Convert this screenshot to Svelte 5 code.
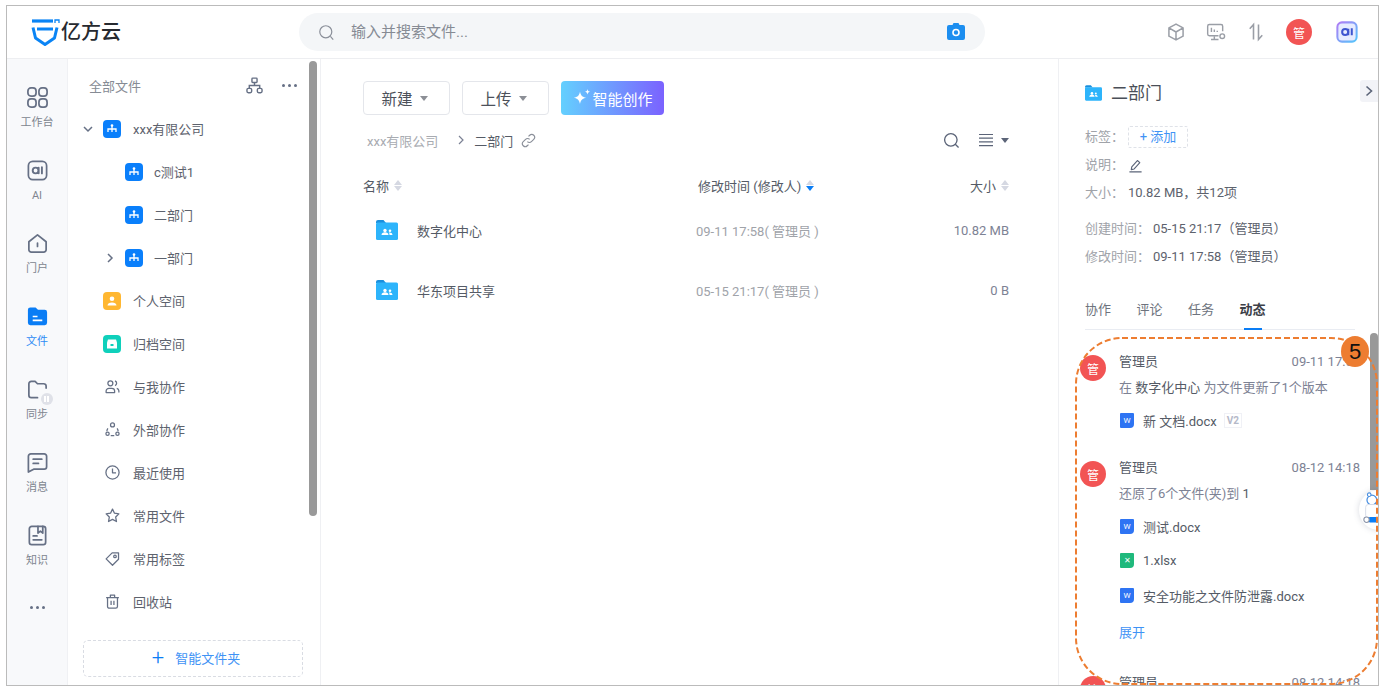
<script>
	const glyphs = {
		apps: '<rect x="2" y="2" width="8.500" height="8.500" rx="3.200"/><rect x="13.500" y="2" width="8.500" height="8.500" rx="3.200"/><rect x="2" y="13.500" width="8.500" height="8.500" rx="3.200"/><rect x="13.500" y="13.500" width="8.500" height="8.500" rx="3.200"/>',
		ai: '<rect x="2.500" y="2.500" width="19" height="19" rx="4.500"/><path d="M13.200 9.200v5.600M13 12a3 3 0 1 1-6 0 3 3 0 0 1 6 0zM16.600 8.600v6.400" stroke-width="2"/>',
		home: '<path d="M3 10.200 12 3l9 7.200v8.300a2.500 2.500 0 0 1-2.500 2.500h-13A2.500 2.500 0 0 1 3 18.500z"/><path d="M12 11.500v3.500"/>',
		sync: '<path d="M12 20.500H5.500A2.500 2.500 0 0 1 3 18V6a2.500 2.500 0 0 1 2.500-2.500h4L12 6h6.500A2.500 2.500 0 0 1 21 8.500v2"/>',
		message: '<path d="M5 3h14a2.500 2.500 0 0 1 2.500 2.500v11A2.500 2.500 0 0 1 19 19H8l-5.500 3V5.500A2.500 2.500 0 0 1 5 3z"/><path d="M7.500 8.500h9M7.500 13h5.500"/>',
		book: '<rect x="3.500" y="2.500" width="17" height="19" rx="2.500"/><path d="M12.500 2.500v7l2.500-2 2.500 2v-7M7.500 12.500h4M7.500 16.500h9"/>',
		people: '<circle cx="9" cy="7.500" r="3.500"/><path d="M3 20.500v-2a4 4 0 0 1 4-4h4a4 4 0 0 1 4 4v2zM15.500 4.200a3.500 3.500 0 0 1 0 6.600M18 14.500a4 4 0 0 1 3 3.500v2.500"/>',
		outer: '<circle cx="12" cy="5.500" r="2.800"/><circle cx="5" cy="18" r="2.300"/><circle cx="19" cy="18" r="2.300"/><path d="M5.500 10.500a8 8 0 0 0-1.500 4M18.500 10.500a8 8 0 0 1 1.500 4M9.500 20.800h5"/>',
		clock: '<circle cx="12" cy="12" r="9.300"/><path d="M12 6.500V12.500h5"/>',
		star: '<path d="m12 3 2.800 5.800 6.200.9-4.500 4.500 1.100 6.300L12 17.500l-5.600 3 1.100-6.300L3 9.700l6.200-.9z"/>',
		tag: '<path d="M3 12.500 11.500 4H20.500v9L12 21.500z"/><circle cx="15.500" cy="9" r="1.800"/>',
		trash: '<path d="M5 7v12a2.500 2.500 0 0 0 2.500 2.500h9A2.500 2.500 0 0 0 19 19V7M3 6.500h18M9 6V3h6v3M10 11v6M14 11v6"/>'
	};

	const railItems = [
		{ icon: 'apps', label: '工作台' },
		{ icon: 'ai', label: 'AI' },
		{ icon: 'home', label: '门户' },
		{ icon: 'file', label: '文件', active: true },
		{ icon: 'sync', label: '同步' },
		{ icon: 'message', label: '消息' },
		{ icon: 'book', label: '知识' }
	];

	const treeItems = [
		{ label: 'xxx有限公司', kind: 'org', arrow: 'down', depth: 0 },
		{ label: 'c测试1', kind: 'org', depth: 1 },
		{ label: '二部门', kind: 'org', depth: 1 },
		{ label: '一部门', kind: 'org', arrow: 'right', depth: 1 },
		{ label: '个人空间', kind: 'person', depth: 0 },
		{ label: '归档空间', kind: 'archive', depth: 0 },
		{ label: '与我协作', icon: 'people', depth: 0 },
		{ label: '外部协作', icon: 'outer', depth: 0 },
		{ label: '最近使用', icon: 'clock', depth: 0 },
		{ label: '常用文件', icon: 'star', depth: 0 },
		{ label: '常用标签', icon: 'tag', depth: 0 },
		{ label: '回收站', icon: 'trash', depth: 0 }
	];

	const files = [
		{ name: '数字化中心', time: '09-11 17:58', size: '10.82 MB' },
		{ name: '华东项目共享', time: '05-15 21:17', size: '0 B' }
	];

	const tabs = ['协作', '评论', '任务', '动态'];
</script>

{#snippet sharedFolder(cls)}
	<svg class={cls} viewBox="0 0 22 20">
		<path d="M0 2a2 2 0 0 1 2-2h5.500l2.500 3H0z" fill="#1b8fdc" />
		<rect y="2.500" width="22" height="17.500" rx="1.500" fill="#2db4fb" />
		<circle cx="9" cy="10.500" r="1.700" fill="#fff" />
		<circle cx="14" cy="10.800" r="1.300" fill="#fff" />
		<path d="M5.500 15c0-2 1.500-2.800 3.500-2.800s3.500.8 3.500 2.800zM13.500 15c0-1.200-.2-1.800-.8-2.500 2-.3 3.800.4 3.800 2.500z" fill="#fff" />
	</svg>
{/snippet}

{#snippet docIcon(kind)}
	<span class="doc {kind}">{kind === 'word' ? 'W' : '✕'}</span>
{/snippet}

<div class="frame">
	<header class="topbar">
		<div class="brand">
			<svg class="brand-mark" viewBox="0 0 30 28" fill="none" stroke="#0a84f5">
				<path d="M1 3h21" stroke-width="3.200" />
				<path d="M24 5V2h4v3" stroke-width="1.300" />
				<path d="M2 9.500 4.500 20 14 26.500 23.500 20 26 9.500" stroke-width="3" stroke-linejoin="round" />
				<path d="M6 11h16" stroke-width="3" />
			</svg>
			<span class="brand-name">亿方云</span>
		</div>
		<div class="search">
			<svg class="search-icon" viewBox="0 0 24 24" fill="none" stroke="#8a8f99" stroke-width="1.700">
				<circle cx="11" cy="11" r="8.500" /><path d="m17.500 17.500 4 4.500" />
			</svg>
			<span class="search-hint">输入并搜索文件...</span>
			<svg class="camera" viewBox="0 0 20 20">
				<path d="M6.500 3 7.500 1h5l1 2H17a2 2 0 0 1 2 2v11a2 2 0 0 1-2 2H3a2 2 0 0 1-2-2V5a2 2 0 0 1 2-2z" fill="#1c8ef0" />
				<circle cx="10" cy="10.500" r="3" fill="none" stroke="#fff" stroke-width="1.600" />
			</svg>
		</div>
		<div class="top-actions">
			<svg class="top-icon" viewBox="0 0 24 24" fill="none" stroke="#9a9ea6" stroke-width="1.800" stroke-linejoin="round">
				<path d="M12 2.500 20.500 7v10L12 21.500 3.500 17V7zM3.500 7l8.500 5 8.500-5M12 12v9.500" />
			</svg>
			<svg class="top-icon" viewBox="0 0 24 24" fill="none" stroke="#9a9ea6" stroke-width="1.700">
				<path d="M15 16.500H4a2 2 0 0 1-2-2V5a2 2 0 0 1 2-2h14a2 2 0 0 1 2 2v6" />
				<path d="M6.500 7v5M10 9v3M13.500 10.500v1.500M10 17v3.500M6 21h9" />
				<circle cx="19.500" cy="17" r="2.800" />
			</svg>
			<svg class="top-icon" viewBox="0 0 24 24" fill="none" stroke="#9a9ea6" stroke-width="1.900">
				<path d="M9 21V3L4.500 8M15 3v18l4.500-5" />
			</svg>
			<span class="avatar top-avatar">管</span>
			<svg class="top-icon ai-badge" viewBox="0 0 24 24" fill="none">
				<defs>
					<linearGradient id="aiStroke" x1="0" y1="0" x2="1" y2="1">
						<stop offset="0" stop-color="#b07cf5" /><stop offset="1" stop-color="#55c5fb" />
					</linearGradient>
				</defs>
				<rect x="1.500" y="1.500" width="21" height="21" rx="5" fill="#e6ebff" stroke="url(#aiStroke)" stroke-width="2.200" />
				<circle cx="10" cy="12" r="3.300" stroke="#3f55d0" stroke-width="2.200" />
				<path d="M13.400 8.500V15.500M17.200 8V15.500" stroke="#3f55d0" stroke-width="2.200" />
			</svg>
		</div>
	</header>

	<div class="body">
		<nav class="rail">
			{#each railItems as item}
				<div class="rail-item" class:active={item.active}>
					{#if item.icon === 'file'}
						<svg class="rail-icon" viewBox="0 0 24 24">
							<path d="M2 5a2.500 2.500 0 0 1 2.500-2.500H10L12.500 5h7A2.500 2.500 0 0 1 22 7.500v11a2.500 2.500 0 0 1-2.500 2.500h-15A2.500 2.500 0 0 1 2 18.500z" fill="#0a7df5" />
							<path d="M7 12h5M7 16h10" stroke="#fff" stroke-width="1.800" />
						</svg>
					{:else}
						<span class="rail-icon-wrap">
							<svg class="rail-icon" viewBox="0 0 24 24" fill="none" stroke="#667085" stroke-width="1.800" stroke-linejoin="round" stroke-linecap="round">
								{@html glyphs[item.icon]}
							</svg>
							{#if item.icon === 'sync'}
								<span class="sync-badge"><i></i><i></i></span>
							{/if}
						</span>
					{/if}
					<span class="rail-label">{item.label}</span>
				</div>
			{/each}
			<div class="rail-more"><i></i><i></i><i></i></div>
		</nav>

		<aside class="tree">
			<div class="tree-head">
				<span class="tree-title">全部文件</span>
				<svg class="org-chart" viewBox="0 0 18 18" fill="none" stroke="#667085" stroke-width="1.500">
					<rect x="6.300" y="1.200" width="5.400" height="4.600" rx=".8" />
					<rect x="1" y="12" width="5" height="4.600" rx="1.500" />
					<rect x="12" y="12" width="5" height="4.600" rx="1.500" />
					<path d="M9 6v3M3.500 12V9h11v3" />
				</svg>
				<div class="more-dots"><i></i><i></i><i></i></div>
			</div>
			<ul class="tree-list">
				{#each treeItems as row}
					<li class="tree-row" class:nested={row.depth === 1}>
						{#if row.arrow}
							<svg class="tree-arrow" class:down={row.arrow === 'down'} viewBox="0 0 10 10" fill="none" stroke="#667085" stroke-width="1.500">
								<path d="m3 1 4 4-4 4" />
							</svg>
						{/if}
						{#if row.kind === 'org'}
							<svg class="tree-icon" viewBox="0 0 18 18">
								<rect width="18" height="18" rx="4" fill="#0a7ffb" />
								<path d="M9 5v3.500M5 12V9h8v3M9 9v3" stroke="#fff" stroke-width="1.300" fill="none" />
								<circle cx="9" cy="5.500" r="1.300" fill="#fff" />
							</svg>
						{:else if row.kind === 'person'}
							<svg class="tree-icon" viewBox="0 0 18 18">
								<rect width="18" height="18" rx="4" fill="#ffb731" />
								<circle cx="9" cy="6.800" r="2.300" fill="#fff" />
								<path d="M4.500 13.500c0-2 2-3 4.500-3s4.500 1 4.500 3z" fill="#fff" />
							</svg>
						{:else if row.kind === 'archive'}
							<svg class="tree-icon" viewBox="0 0 18 18">
								<rect width="18" height="18" rx="4" fill="#0fd0bb" />
								<path d="M4 7.500 5 4.500h8l1 3v6H4z" fill="#fff" />
								<rect x="7.500" y="9" width="3" height="2" fill="#0fd0bb" />
							</svg>
						{:else}
							<svg class="tree-icon line" viewBox="0 0 24 24" fill="none" stroke="#667085" stroke-width="1.800" stroke-linejoin="round">
								{@html glyphs[row.icon]}
							</svg>
						{/if}
						<span class="tree-label">{row.label}</span>
					</li>
				{/each}
			</ul>
			<div class="smart-folder"><span class="plus">+</span>智能文件夹</div>
			<span class="tree-scroll"></span>
		</aside>

		<main class="main">
			<div class="toolbar">
				<button class="btn">新建<span class="caret"></span></button>
				<button class="btn">上传<span class="caret"></span></button>
				<button class="btn-smart">
					<svg viewBox="0 0 20 20" fill="#fff">
						<path d="M8 3.500c.7 4 2.300 5.600 6.300 6.300-4 .7-5.600 2.300-6.300 6.300-.7-4-2.300-5.600-6.300-6.300 4-.7 5.600-2.300 6.300-6.300z" />
						<path d="M15.500 1c.3 1.800 1 2.500 2.800 2.800-1.800.3-2.500 1-2.800 2.800-.3-1.800-1-2.500-2.800-2.800 1.800-.3 2.500-1 2.800-2.800z" />
					</svg>
					智能创作
				</button>
			</div>
			<div class="crumbs">
				<span class="crumb-root">xxx有限公司</span>
				<svg class="crumb-sep" viewBox="0 0 10 10" fill="none" stroke="#7b8194" stroke-width="1.200"><path d="m3 1 4 4-4 4" /></svg>
				<span class="crumb-current">二部门</span>
				<svg class="crumb-link" viewBox="0 0 16 16" fill="none" stroke="#8a8f99" stroke-width="1.200">
					<path d="M6.800 9.200a3 3 0 0 0 4.300 0l2.500-2.500a3 3 0 0 0-4.300-4.300L8 3.700M9.200 6.800a3 3 0 0 0-4.300 0L2.400 9.300a3 3 0 0 0 4.300 4.300L8 12.300" />
				</svg>
				<div class="crumb-tools">
					<svg class="tool-search" viewBox="0 0 18 18" fill="none" stroke="#5b6478" stroke-width="1.400">
						<circle cx="8.300" cy="8.300" r="6.600" /><path d="m13 13 3.500 3.500" />
					</svg>
					<svg class="tool-list" viewBox="0 0 14 14" fill="none" stroke="#5b6478" stroke-width="1.200">
						<path d="M0 1.500h14M0 5.200h14M0 8.900h14M0 12.600h14" />
					</svg>
					<span class="caret dark"></span>
				</div>
			</div>
			<div class="table-row table-head">
				<span class="col-name">名称<span class="sorter"></span></span>
				<span class="col-time">修改时间 (修改人)<span class="sorter current"></span></span>
				<span class="col-size">大小<span class="sorter"></span></span>
			</div>
			{#each files as file}
				<div class="table-row file-row">
					<span class="col-name">
						{@render sharedFolder('file-folder')}
						<span class="file-name">{file.name}</span>
					</span>
					<span class="col-time muted">{file.time}( 管理员 )</span>
					<span class="col-size size-text">{file.size}</span>
				</div>
			{/each}
		</main>

		<section class="detail">
			<span class="collapse">
				<svg viewBox="0 0 10 12" fill="none" stroke="#5b6478" stroke-width="1.600"><path d="m2.500 1.500 5 4.500-5 4.500" /></svg>
			</span>
			<h2 class="detail-title">{@render sharedFolder('title-folder')}二部门</h2>
			<div class="meta">
				<div class="meta-row tag-row"><span class="meta-key">标签：</span><span class="add-tag">+ 添加</span></div>
				<div class="meta-row note-row">
					<span class="meta-key">说明：</span>
					<svg class="pencil" viewBox="0 0 16 16" fill="none" stroke="#5b6478" stroke-width="1.200" stroke-linejoin="round">
						<path d="m4 9.500 6-6.800 2.600 2.200-6 6.800-3.100.7zM1.500 14.800h13" />
					</svg>
				</div>
				<div class="meta-row"><span class="meta-key">大小：</span>10.82 MB，共12项</div>
			</div>
			<div class="meta second">
				<div class="meta-row"><span class="meta-key wide">创建时间：</span>05-15 21:17（管理员）</div>
				<div class="meta-row"><span class="meta-key wide">修改时间：</span>09-11 17:58（管理员）</div>
			</div>
			<div class="tabs">
				{#each tabs as tab, i}
					<span class="tab" class:current={i === 3}>{tab}</span>
				{/each}
			</div>
			<div class="feed">
				<article class="event">
					<span class="avatar event-avatar">管</span>
					<div class="event-head"><span>管理员</span><time>09-11 17:58</time></div>
					<p class="event-text">在 <b>数字化中心</b> 为文件更新了1个版本</p>
					<div class="doc-row first">{@render docIcon('word')}新 文档.docx<span class="version">V2</span></div>
				</article>
				<article class="event">
					<span class="avatar event-avatar">管</span>
					<div class="event-head"><span>管理员</span><time>08-12 14:18</time></div>
					<p class="event-text">还原了6个文件(夹)到 <b>1</b></p>
					<div class="doc-row first">{@render docIcon('word')}测试.docx</div>
					<div class="doc-row">{@render docIcon('sheet')}1.xlsx</div>
					<div class="doc-row">{@render docIcon('word')}安全功能之文件防泄露.docx</div>
					<span class="expand">展开</span>
				</article>
				<article class="event">
					<span class="avatar event-avatar">管</span>
					<div class="event-head"><span>管理员</span><time>08-12 14:18</time></div>
				</article>
			</div>

			<span class="detail-scroll"></span>
			<span class="helper">
				<svg viewBox="0 0 22 38" fill="none">
					<circle cx="12" cy="9" r="5.500" stroke="#4a8fe0" stroke-width="1.400" fill="#fff" />
					<circle cx="9" cy="3" r="2" stroke="#4a8fe0" stroke-width="1.200" fill="#fff" />
					<circle cx="8" cy="18" r="1.800" fill="#fbd3d8" />
					<rect x="5" y="14" width="15" height="15" rx="3" fill="#fff" stroke="#d5dae6" />
					<rect x="8" y="28" width="14" height="6" rx="2" fill="#0a7df5" />
					<circle cx="6" cy="31" r="3" stroke="#8b94a8" stroke-width="1.200" fill="#fff" />
				</svg>
			</span>
		</section>
	</div>

	<svg class="callout" viewBox="0 0 304 348" fill="none">
		<rect x="1" y="1" width="301" height="346" rx="46" stroke="#ed7d31" stroke-width="2" stroke-dasharray="6 3" />
	</svg>
	<span class="callout-no">5</span>
</div>

<style>
	:global(body) {
		margin: 0;
		background: #fff;
		font-family: Roboto, "Noto Sans CJK SC", sans-serif;
		font-size: 13px;
		color: #555b66;
	}

	.frame {
		position: relative;
		box-sizing: border-box;
		width: 1373px;
		height: 681px;
		margin: 5px 0 0 6px;
		border: 1px solid #bbb;
		overflow: hidden;
		display: flex;
		flex-direction: column;
	}

	/* top bar */
	.topbar {
		flex: none;
		height: 53px;
		box-sizing: border-box;
		border-bottom: 1px solid #edeef1;
		display: flex;
		align-items: center;
	}

	.brand {
		width: 292px;
		display: flex;
		align-items: center;
		padding-left: 24px;
		box-sizing: border-box;
	}

	.brand-mark {
		width: 30px;
		height: 28px;
	}

	.brand-name {
		font-size: 20px;
		font-weight: 500;
		color: #26292f;
		line-height: 28px;
	}

	.search {
		width: 686px;
		height: 38px;
		border-radius: 19px;
		background: #f4f6f8;
		display: flex;
		align-items: center;
		padding: 0 19px;
		box-sizing: border-box;
	}

	.search-icon {
		width: 17px;
		height: 17px;
	}

	.search-hint {
		margin-left: 16px;
		margin-top: -3px;
		font-size: 15px;
		color: #868b94;
		flex: 1;
	}

	.camera {
		width: 20px;
		height: 20px;
	}

	.top-actions {
		margin-left: auto;
		display: flex;
		align-items: center;
		gap: 20px;
		padding-right: 20px;
	}

	.top-icon {
		width: 20px;
		height: 20px;
	}

	.ai-badge {
		margin-left: 4px;
		width: 22px;
		height: 22px;
	}

	.avatar {
		display: flex;
		align-items: center;
		justify-content: center;
		border-radius: 50%;
		background: #f25454;
		color: #fff;
		font-size: 12px;
	}

	.top-avatar {
		width: 26px;
		height: 26px;
	}

	.body {
		flex: 1;
		min-height: 0;
		display: flex;
	}

	/* left rail */
	.rail {
		flex: none;
		width: 60px;
		background: #f8f9fb;
		border-right: 1px solid #f0f1f4;
		display: flex;
		flex-direction: column;
		align-items: center;
		padding-top: 27px;
	}

	.rail-item {
		height: 73px;
		display: flex;
		flex-direction: column;
		align-items: center;
	}

	.rail-icon-wrap {
		position: relative;
		height: 23px;
	}

	.rail-icon {
		display: block;
		width: 23px;
		height: 23px;
	}

	.rail-label {
		margin-top: 6px;
		font-size: 11px;
		line-height: 16px;
		color: #80858f;
	}

	.active .rail-label {
		color: #2f8bf5;
	}

	.sync-badge {
		position: absolute;
		right: -4px;
		bottom: -4px;
		width: 12px;
		height: 12px;
		border-radius: 50%;
		background: #dfe1e8;
		display: flex;
		align-items: center;
		justify-content: center;
		gap: 1px;
	}

	.sync-badge i {
		width: 2px;
		height: 6px;
		background: #fff;
	}

	.rail-more {
		display: flex;
		gap: 3px;
		margin-top: 9px;
	}

	.rail-more i,
	.more-dots i {
		width: 3px;
		height: 3px;
		border-radius: 50%;
		background: #667085;
	}

	/* tree */
	.tree {
		position: relative;
		flex: none;
		width: 253px;
		box-sizing: border-box;
		border-right: 1px solid #eff0f3;
		background: #fff;
		display: flex;
		flex-direction: column;
	}

	.tree-head {
		height: 48px;
		flex: none;
		display: flex;
		align-items: center;
		padding: 4px 23px 0 21px;
		box-sizing: border-box;
	}

	.tree-title {
		flex: 1;
		color: #868b94;
	}

	.org-chart {
		width: 17px;
		height: 17px;
		margin-right: 19px;
	}

	.more-dots {
		display: flex;
		gap: 3px;
	}

	.tree-list {
		list-style: none;
		margin: 0;
		padding: 0;
	}

	.tree-row {
		position: relative;
		height: 43px;
		display: flex;
		align-items: center;
		padding-left: 35px;
	}

	.tree-row.nested {
		padding-left: 57px;
	}

	.tree-arrow {
		position: absolute;
		margin-left: -20px;
		width: 10px;
		height: 10px;
	}

	.tree-arrow.down {
		transform: rotate(90deg);
	}

	.tree-icon {
		width: 18px;
		height: 18px;
		flex: none;
	}

	.tree-icon.line {
		width: 17px;
		height: 17px;
		margin: 0 .5px;
	}

	.tree-label {
		margin-left: 12px;
		color: #5d626d;
	}

	.nested .tree-label {
		margin-left: 11px;
	}

	.smart-folder {
		margin: 17px 17px 0 15px;
		height: 37px;
		box-sizing: border-box;
		border: 1px dashed #d9dce3;
		border-radius: 5px;
		padding: 0 0 2px 6px;
		display: flex;
		align-items: center;
		justify-content: center;
		color: #3f93f5;
	}

	.plus {
		font-size: 22px;
		line-height: 20px;
		font-weight: 300;
		color: #0a7df5;
		margin-right: 11px;
	}

	.tree-scroll {
		position: absolute;
		top: 2px;
		right: 3px;
		width: 8px;
		height: 455px;
		border-radius: 4px;
		background: #999;
	}

	/* file list */
	.main {
		flex: 1;
		min-width: 0;
		padding: 22px 49px 0 42px;
		border-right: 1px solid #eff0f3;
	}

	.toolbar {
		display: flex;
		gap: 12px;
	}

	.btn,
	.btn-smart {
		height: 34px;
		box-sizing: border-box;
		border-radius: 4px;
		font: inherit;
		font-size: 15px;
		display: flex;
		align-items: center;
		justify-content: center;
		padding: 0;
	}

	.btn {
		width: 87px;
		padding-right: 4px;
		background: #fff;
		border: 1px solid #e4e6eb;
		color: #4c515a;
		font-size: 15.500px;
	}

	.btn-smart {
		width: 103px;
		border: 0;
		color: #fff;
		background: linear-gradient(90deg, #64d0fe, #7b62ff);
	}

	.btn-smart svg {
		width: 20px;
		height: 20px;
		margin-right: 0;
	}

	.caret {
		width: 0;
		height: 0;
		margin-left: 7px;
		border: 4px solid transparent;
		border-top: 5px solid #8c8f96;
		border-bottom: 0;
	}

	.caret.dark {
		border-top-color: #5b6478;
		margin-left: 8px;
	}

	.crumbs {
		height: 20px;
		margin-top: 15px;
		display: flex;
		align-items: center;
		padding-left: 4px;
	}

	.crumb-root {
		color: #a8abb1;
	}

	.crumb-sep {
		width: 10px;
		height: 10px;
		margin: 0 8px 0 18px;
	}

	.crumb-link {
		width: 15px;
		height: 15px;
		margin-left: 8px;
	}

	.crumb-tools {
		margin-left: auto;
		display: flex;
		align-items: center;
	}

	.tool-search {
		width: 17px;
		height: 17px;
		margin-right: 19px;
	}

	.tool-list {
		width: 14px;
		height: 14px;
	}

	.table-row {
		display: flex;
		align-items: center;
	}

	.table-head {
		margin-top: 25px;
		height: 20px;
	}

	.file-row {
		height: 60px;
	}

	.table-head + .file-row {
		margin-top: 5px;
	}

	.col-name {
		width: 333px;
		display: flex;
		align-items: center;
	}

	.col-time {
		flex: 1;
		display: flex;
		align-items: center;
	}

	.table-head .col-time {
		padding-left: 2px;
	}

	.col-size {
		display: flex;
		align-items: center;
		justify-content: flex-end;
	}

	.sorter {
		position: relative;
		width: 8px;
		height: 11px;
		margin-left: 5px;
	}

	.sorter::before,
	.sorter::after {
		content: "";
		position: absolute;
		left: 0;
		border: 4px solid transparent;
	}

	.sorter::before {
		top: 0;
		border-bottom: 5px solid #d5d8e2;
		border-top: 0;
	}

	.sorter::after {
		bottom: 0;
		border-top: 5px solid #d5d8e2;
		border-bottom: 0;
	}

	.sorter.current::after {
		border-top-color: #0a7df5;
	}

	.file-folder {
		width: 22px;
		height: 20px;
		margin-left: 13px;
	}

	.file-name {
		margin-left: 19px;
	}

	.muted {
		color: #a0a3a9;
	}

	.size-text {
		color: #7d8294;
	}

	/* detail panel */
	.detail {
		position: relative;
		flex: none;
		width: 319px;
		padding: 0 0 0 26px;
		box-sizing: border-box;
		overflow: hidden;
	}

	.collapse {
		position: absolute;
		top: 21px;
		right: 0;
		width: 18px;
		height: 22px;
		border-radius: 3px 0 0 3px;
		background: #f2f3f7;
		display: flex;
		align-items: center;
		justify-content: center;
	}

	.collapse svg {
		width: 10px;
		height: 12px;
	}

	.detail-title {
		margin: 0;
		padding-top: 23px;
		height: 45px;
		box-sizing: border-box;
		font-size: 17px;
		font-weight: 400;
		line-height: 24px;
		color: #4a4f58;
		display: flex;
		align-items: center;
	}

	.title-folder {
		width: 17px;
		height: 16px;
		margin-right: 9px;
	}

	.meta {
		margin-top: 19px;
		line-height: 28px;
	}

	.meta.second {
		margin-top: 8px;
	}

	.meta-row {
		height: 28px;
		display: flex;
		align-items: center;
		color: #5d626d;
	}

	.meta-key {
		width: 43px;
		color: #a0a3a9;
	}

	.meta-key.wide {
		width: 68px;
	}

	.add-tag {
		width: 60px;
		height: 22px;
		box-sizing: border-box;
		border: 1px dashed #dfe2e8;
		border-radius: 2px;
		display: flex;
		align-items: center;
		justify-content: center;
		color: #3f93f5;
	}

	.pencil {
		width: 15px;
		height: 15px;
	}

	.tabs {
		margin-top: 28px;
		margin-right: 23px;
		display: flex;
		gap: 25.500px;
		height: 30px;
		border-bottom: 1px solid #e9ecf2;
		line-height: 22px;
	}

	.tab {
		position: relative;
		height: 30px;
		color: #6e737d;
	}

	.tab.current {
		font-weight: 700;
		color: #3c4048;
	}

	.tab.current::after {
		content: "";
		position: absolute;
		left: 4px;
		right: 4px;
		bottom: -1px;
		height: 2px;
		background: #0a7df5;
	}

	.feed {
		padding-top: 22px;
		margin-right: 18px;
	}

	.event {
		position: relative;
		padding-left: 34px;
		padding-bottom: 28px;
	}

	.event-avatar {
		position: absolute;
		left: -5px;
		top: 3px;
		width: 26px;
		height: 26px;
	}

	.event-head {
		display: flex;
		justify-content: space-between;
		line-height: 20px;
		color: #555b66;
	}

	.event-head time {
		color: #7d8294;
	}

	.event-text {
		margin: 6px 0 0;
		line-height: 20px;
		color: #7d8294;
	}

	.event-text b {
		font-weight: 400;
		color: #555b66;
	}

	.doc-row {
		height: 20px;
		margin-top: 14.500px;
		display: flex;
		align-items: center;
	}

	.doc-row.first {
		margin-top: 12px;
	}

	.doc {
		width: 14px;
		height: 15px;
		margin: 0 9px 0 1px;
		border-radius: 1px;
		border-bottom-right-radius: 4px;
		color: #fff;
		font-size: 8px;
		line-height: 15px;
		text-align: center;
	}

	.doc.word {
		background: #2e74f3;
	}

	.doc.sheet {
		background: #1fb97c;
	}

	.version {
		margin-left: 7px;
		padding: 0 2px;
		border: 1px solid #f0f1f6;
		font-size: 10px;
		font-weight: 700;
		line-height: 13px;
		color: #b5b9c9;
	}

	.expand {
		display: block;
		margin: 18px 0 2px;
		line-height: 20px;
		color: #3f93f5;
	}

	.detail-scroll {
		position: absolute;
		top: 274px;
		right: 0;
		width: 8px;
		height: 157px;
		border-radius: 4px 4px 0 0;
		background: #999;
	}

	.helper {
		position: absolute;
		top: 431px;
		right: -21px;
		width: 40px;
		height: 40px;
		border-radius: 50%;
		background: #fff;
		box-shadow: 0 0 6px rgba(60, 70, 100, 0.2);
	}

	.helper svg {
		width: 20px;
		height: 34px;
		margin: 2px 0 0 2px;
	}

	/* annotation over the feed */
	.callout {
		position: absolute;
		left: 1068px;
		top: 331px;
		width: 304px;
		height: 348px;
		pointer-events: none;
	}

	.callout-no {
		position: absolute;
		left: 1334px;
		top: 330px;
		width: 28px;
		height: 31px;
		border-radius: 50%;
		background: #ed7d31;
		color: #111;
		font-family: "Liberation Sans", sans-serif;
		font-size: 22px;
		line-height: 31px;
		text-align: center;
	}
</style>
